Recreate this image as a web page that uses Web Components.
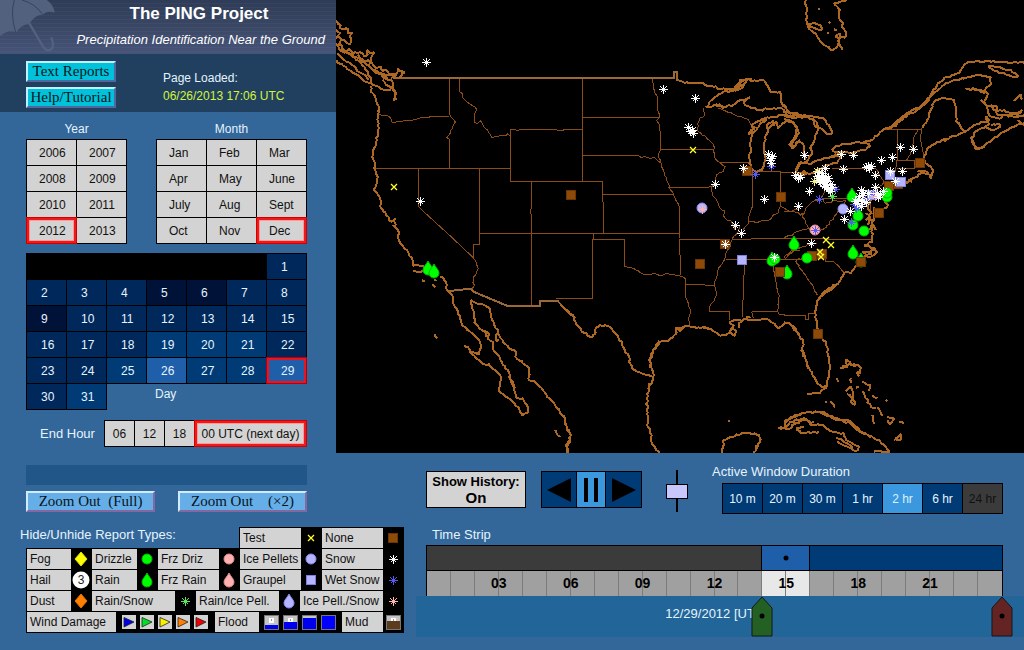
<!DOCTYPE html>
<html lang="en">
<head>
<meta charset="utf-8">
<title>The PING Project</title>
<style>
  html { background: #336699; }
  body { margin: 0; color: #e4f4ff; font: 12px/16px "Liberation Sans", Arial, sans-serif; }
</style>
</head>
<body>
<ping-page>
  <ping-sidebar slot="side"></ping-sidebar>
  <ping-map slot="map"></ping-map>
  <ping-legend slot="legend"></ping-legend>
  <ping-controls slot="controls"></ping-controls>
</ping-page>

<script>
const define = (name, html, setup) => customElements.define(name, class extends HTMLElement {
  connectedCallback() {
    if (this.shadowRoot) return;
    const root = this.attachShadow({ mode: 'open' });
    root.innerHTML = (typeof html === 'function') ? html(this) : html;
    if (setup) setup(root, this);
  }
});

/* ---------- marker symbols shared by the map and the legend ---------- */
const star = c => `<path d="M.5-4V5M-4 .5H5M-2.500-2.500L3.500 3.500M3.500-2.500L-2.500 3.500" fill="none" stroke="${c}" shape-rendering="crispEdges"/>`;
const drop = (c, e) => `<path d="M0-7C2-3 5-1 5 2A5 5 0 0 1-5 2C-5-1-2-3 0-7Z" fill="${c}" stroke="${e}"/>`;
const disc = (c, e) => `<circle r="5" fill="${c}" stroke="${e}"/>`;
const box = (c, e) => `<rect x="-4.500" y="-4.500" width="9" height="9" fill="${c}" stroke="${e}"/>`;
const SYM = {
  snow: star('#fff'), wet: star('#5a5af0'), mix: star('#58e858'), pink: star('#ffb4b4'), ystar: star('#f0f080'),
  test: '<path d="M-3-3L3 3M3-3L-3 3" fill="none" stroke="#ff3" stroke-width="1.3"/>',
  none: box('#8f4a08', '#6a3606'), rain: drop('#0f0', '#0b0'), drizzle: disc('#0f0', '#0b0'),
  frain: drop('#ffb0b0', '#e08c8c'), fdriz: disc('#ffb0b0', '#e08c8c'),
  pellets: disc('#b4b4ff', '#8c8cf0'), graupel: box('#b4b4ff', '#8080e0'), rpell: drop('#b4b4ff', '#8c8cf0'),
  fog: '<path d="M0-7L6 0 0 7-6 0Z" fill="#ff0" stroke="#dcdc00"/>',
  dust: '<path d="M0-7L6 0 0 7-6 0Z" fill="#ff8000" stroke="#e07000"/>'
};

/* ---------- page shell ---------- */
define('ping-page', `
<style>
  :host { display: grid; grid-template-columns: 336px 80px minmax(0, 1fr); grid-template-rows: auto 62px auto; }
  ::slotted([slot=side]) { grid-area: 1 / 1 / 3 / 2; }
  ::slotted([slot=map]) { grid-area: 1 / 2 / 2 / 4; }
  ::slotted([slot=legend]) { grid-area: 3 / 1 / 4 / 3; }
  ::slotted([slot=controls]) { grid-area: 2 / 3 / 4 / 4; }
</style>
<slot name="side"></slot><slot name="map"></slot><slot name="legend"></slot><slot name="controls"></slot>`);

define('ping-choices', el => {
  const items = el.getAttribute('items').split(',');
  return `
<style>
  :host { display: grid; grid-template-columns: var(--cols, 1fr); grid-auto-rows: var(--row, 25px); gap: 1px; padding: 1px; background: #000; }
  button { position: relative; border: 0; margin: 0; padding: 0 0 0 var(--inset, 12px); background: var(--cell, #d3d3d3); color: var(--ink, #111);
    font: inherit; text-align: var(--align, left); white-space: nowrap; }
  .ring { box-shadow: 0 0 0 1px #d00000, inset 0 0 0 2px #f01818, inset 0 0 0 3px #ff9a9a; z-index: 1; }
  .lit { background: #3c98de; color: #d8f2ff; }
  button:disabled { background: #3b3b3b; color: #111; }
</style>
${items.map(t => `<button type="button" class="${t === el.getAttribute('ring') ? 'ring' : t === el.getAttribute('lit') ? 'lit' : ''}"${t === el.getAttribute('off') ? ' disabled' : ''}>${t}</button>`).join('')}`;
});

define('ping-calendar', () => {
  const tone = { 5: 'd', 6: 'd', 9: 'd', 19: 'm', 20: 'm', 21: 'm', 25: 'm', 27: 'm', 28: 'm', 31: 'm', 26: 'h', 29: 'h ring' };
  let days = '';
  for (let d = 1; d <= 31; d++) days += `<button type="button" class="${tone[d] || ''}">${d}</button>`;
  return `
<style>
  :host { display: grid; grid-template-columns: repeat(7, 1fr); grid-auto-rows: 25px; gap: 1px; padding: 1px; }
  button { border: 0; margin: 0; padding: 0 0 0 14px; font: inherit; text-align: left; color: #e4f4ff; background: #00285a; box-shadow: 0 0 0 1px #000; }
  .blank { grid-column: span 6; background: #000; box-shadow: 0 0 0 1px #000; }
  .d { background: #001238; } .m { background: #003b75; } .h { background: #1f5fa9; }
  .ring { position: relative; box-shadow: 0 0 0 1px #b00010, inset 0 0 0 2px #e81420; }
  span { grid-column: 4 / span 2; padding: 2px 0 0 8px; }
</style>
<div class="blank"></div>${days}<span>Day</span>`;
});

/* ---------- left column ---------- */
define('ping-sidebar', `
<style>
  :host { display: block; }
  header { position: relative; height: 54px; overflow: hidden; box-sizing: border-box;
    background: repeating-linear-gradient(#0000 0 3px, #ffffff08 3px 4px), linear-gradient(#2e3c58, #3a4764 50%, #46547a); color: #fff; }
  header svg { position: absolute; left: 0; top: 0; }
  h1 { margin: 0; padding: 2px 0 0 62px; font: bold 17px/24px "Liberation Sans", Arial, sans-serif; text-align: center; }
  h2 { margin: 0; padding: 4px 11px 0 0; font: italic 13px/20px "Liberation Sans", Arial, sans-serif; text-align: right; white-space: nowrap; position: relative; }
  .info { display: grid; grid-template-columns: 90px 1fr; column-gap: 47px; background: #21405f; height: 58px; padding: 7px 26px 4px; box-sizing: border-box; }
  .links { display: grid; grid-auto-rows: 21px; row-gap: 5px; }
  .raised { margin: 0; padding: 0; border: 2px solid; border-color: #c0f0ff #5068a0 #5068a0 #c0f0ff; background: #00c2da; color: #061420;
    font: 15px/17px "Liberation Serif", "Times New Roman", serif; white-space: pre; text-align: center; }
  .info p { margin: 8px 0 0; line-height: 18px; white-space: nowrap; }
  .info time { color: #d2f53c; display: block; }
  .pick { padding: 8px 29px 0 26px; }
  .two { display: grid; grid-template-columns: 101px 151px; justify-content: space-between; text-align: center; line-height: 19px; }
  .y { --cols: repeat(2, 1fr); } .m { --cols: repeat(3, 1fr); }
  ping-choices { line-height: 16px; }
  ping-calendar { margin-top: 9px; }
  .hour { display: flex; align-items: center; justify-content: space-between; margin-top: 10px; padding-left: 14px; font-size: 13px; }
  .hour ping-choices { --cols: 29px 29px 29px 111px; --inset: 0; --align: center; font-size: 12px; }
  .bar { height: 20px; margin-top: 18px; background: #215788; }
  .zoom { display: grid; grid-template-columns: 129px 129px; justify-content: space-between; grid-auto-rows: 21px; margin-top: 6px; }
  .zoom .raised { background: #66aee8; border-color: #d0ecff #8468a0 #8468a0 #d0ecff; }
</style>
<header>
  <svg width="56" height="54" viewBox="0 0 168 162" aria-hidden="true">
    <path d="M0 0H140Q160 12 164 38Q142 30 128 44Q104 44 88 72Q62 74 48 98Q28 86 0 108Z" fill="#52627e"/>
    <path d="M43 0Q30 40 47 98M66 0Q108 12 128 44" fill="none" stroke="#35435f" stroke-width="3"/>
    <path d="M88 70L127 136Q137 154 150 150Q162 144 158 126L154 112" fill="none" stroke="#52627e" stroke-width="7"/>
  </svg>
  <h1>The PING Project</h1>
  <h2>Precipitation Identification Near the Ground</h2>
</header>
<div class="info">
  <div class="links"><button type="button" class="raised">Text Reports</button><button type="button" class="raised">Help/Tutorial</button></div>
  <p>Page Loaded:<time>06/26/2013 17:06 UTC</time></p>
</div>
<div class="pick">
  <div class="two">
    <span>Year</span><span>Month</span>
    <ping-choices class="y" items="2006,2007,2008,2009,2010,2011,2012,2013" ring="2012"></ping-choices>
    <ping-choices class="m" items="Jan,Feb,Mar,Apr,May,June,July,Aug,Sept,Oct,Nov,Dec" ring="Dec"></ping-choices>
  </div>
  <ping-calendar></ping-calendar>
  <div class="hour"><span>End Hour</span><ping-choices items="06,12,18,00 UTC (next day)" ring="00 UTC (next day)"></ping-choices></div>
  <div class="bar"></div>
  <div class="zoom"><button type="button" class="raised">Zoom Out  (Full)</button><button type="button" class="raised">Zoom Out    (×2)</button></div>
</div>`);

/* ---------- map ---------- */
const TILES = [
  { x: 336, y: 0,
    coast: ['0 180 8 190 20 196 35 208 50 218 65 225 80 238 100 250 112 256 140 268 165 268', '0 130 10 150 25 158 45 165 60 180 75 190 85 200 95 215 105 235 112 256', '4 160 20 175 40 188 60 205 80 222 98 240',
      '0 60 5 72 15 75 10 85 22 88 30 85 38 88 35 100 50 98 42 110 45 125 42 133 30 125 15 118 5 110 0 115', '0 90 12 100 5 108 15 118 8 135 20 140 15 150 35 152 40 146 50 160 65 158 80 160 85 170 95 165 92 150 102 160 115 157 105 175 108 190 120 205 135 200 140 212 150 210 160 222 180 225 185 205 195 215 207 217 195 230 180 235 165 233',
      '20 150 40 160 60 172 80 178 95 195 105 205 125 215 150 225 180 230', '65 165 78 185 98 180 100 200 120 218 140 222 155 235', '135 225 150 238 165 240 172 250 170 265 178 275 172 300 180 298 176 270 165 262 150 255 140 240',
      '105 258 105 275 117 288 122 310 130 325 125 345 128 370 126 400 120 430 112 450 108 470 117 490 118 510 125 530 120 555 113 570 130 590 133 620 150 645 168 665 178 655 175 680 184 690 172 676'],
    river: ['130 342 150 345 162 352 168 367 185 365 205 362 225 362 250 355 285 349 340 349', '340 340 345 352 358 366 350 385 332 412 342 420 340 430', '370 275 378 280 380 292 395 307 422 328 415 345 416 368 425 370 435 362 445 383 455 390 467 413 480 408 495 406 510 406 515 402 523 408'],
    line: 'M340 234V340M340 430V505M118 505H523M370 234V275M523 388V545H720M523 388H535L545 392 553 388H655L665 391 685 390 695 388H720M247 505V620L323 690M430 505V690M586 545V625L583 635 586 645V690',
    nation: 'M175 234H720' },
  { x: 336, y: 225,
    coast: ['170 0 182 10 188 20 185 35 192 55 205 70 218 85 228 98 232 122 262 124 275 138', '232 140 255 140 262 137', '312 155 325 165 332 178 332 195 340 203 350 222 352 235 365 258 372 280 382 303 400 318 420 335 433 355 432 375 425 385 405 380 395 365 383 361', '400 378 425 403 445 418 465 425 487 445 495 462 490 498 505 512 530 530 550 550 560 572 575 563 577 550 565 530 560 520 548 520 540 518 535 495 525 465 515 435 500 420 490 395 472 375 470 350 455 340 445 320 430 310 415 293 413 260 405 225',
      '405 225 425 237 440 238 462 250 465 275 475 300 485 320 492 335 500 345 520 372 540 380 542 400 560 415 580 432 577 462 600 475 620 495 640 520 655 535 672 562 688 585 693 615 705 630 702 650 693 665 695 685', '448 315 452 335 460 330 450 320', '485 325 480 348 490 345', '522 455 530 480 538 490', '418 385 432 388', '448 420 460 415', '258 166 266 170', '290 178 298 186', '295 163 302 168', '295 326 303 340', '658 615 664 630 674 636'],
    river: ['412 98 420 110 427 130 420 148 412 165 415 180 408 192'],
    line: 'M586 0V243M430 25H720M308 0L412 98M430 0V58H412V98M660 220H720',
    nation: 'M340 198L405 191 412 200 515 243H612V228H665L690 255 717 280' },
  { x: 560, y: 0,
    coast: ['365 244 380 247 400 248 430 250 440 257 460 260 480 267 520 268 530 255 545 245 560 235 575 245 605 240 620 255 630 275 660 275 662 300 670 318 685 335 720 345', '437 322 455 300 470 288 490 275 520 272 545 265 560 245 530 262 540 240 575 238', '437 322 455 320 470 313 490 320 520 315 545 300 570 292 550 305 555 315 575 325 600 330 640 325 665 325 680 340', '470 320 480 313 492 326', '525 275 540 252 550 262',
      '565 405 580 385 575 375 590 365 605 358 620 358 600 372 590 390 575 405 572 425 572 450 567 465 570 480 573 505 590 515 605 510 612 490 615 470 612 450 612 430 615 410 625 395 622 375 638 362 640 378 650 365 655 385 665 375 680 360 700 365 710 380 708 400 700 420 688 435 700 440 720 420', '605 358 635 350 665 345 690 352 720 350', '565 400 585 380', '625 385 640 370'],
    river: ['475 325 495 332 520 342 545 350 565 358 570 370 575 385', '430 325 432 350 418 355 413 370 415 395 440 415 460 432 463 460 465 475 480 488 495 500 490 515 470 525 465 545 455 560 457 585 470 600 480 625 495 630 490 645 500 660 515 665 525 690', '277 234 283 270 292 290 292 325 299 345 298 352 290 362 300 375 302 400', '235 466 243 472 263 472 271 476 283 472 295 484 300 487', '302 448 296 460 300 485 310 510 320 540 328 562 340 583 347 600 355 612 358 620', '577 620 570 640 565 670 550 690', '565 665 590 668 610 660 625 662 640 645 655 638 660 620 675 625 690 635 715 630'],
    line: 'M302 400V448H462M67 352H298M67 234V545M0 391H10L13 388H67M67 466H235M358 620V690M325 562H440L455 560M128 583H340M0 545H128V605L131 610V690M480 487H573M577 515V620M661 517V620M595 515H661V517H720',
    nation: 'M0 234H342V217H352V240L365 244' },
  { x: 560, y: 225,
    coast: ['0 235 20 255 42 275 50 300 65 320 97 337 107 325 108 308 120 300 145 303 160 320 175 335 185 360 207 395 210 415 220 433 250 447 275 455', '280 455 275 430 270 400 280 375 300 352 325 347 350 325 350 308 365 310 385 303 410 308 440 308 460 318 480 332 505 325 515 310 530 320 525 332 510 320 522 300 510 292 530 285 570 285 620 281 635 292 655 310 670 300 685 293 700 305 715 325 720 330', '272 430 268 405 278 380 298 348', '345 308 360 318 370 308', '430 308 448 310', '560 283 562 275 572 278', '536 308 538 294 545 290', '280 455 275 475 265 490 262 520 262 600 275 630 275 655 298 683', '268 475 265 500', '487 683 490 645 515 635 545 625 570 625 598 628 600 650 590 670 580 683', '585 665 598 658', '0 565 15 580 20 610 33 630 25 650 18 660 22 683', '655 610 680 610 675 595 690 580 720 568', '660 606 685 612 700 598 720 592', '712 605 720 620', '506 586 510 590'],
    river: ['193 123 205 128 220 130 240 142 255 148 280 146 300 152 315 147 340 148 355 152 375 160', '376 215 385 235 392 260 385 280 387 300', '540 0 535 20 520 35 510 65 497 85 490 110 475 130 470 155 462 178 470 210 455 235 448 258', '648 170 657 210 653 258 657 268', '676 103 685 90 700 78 720 75', '720 100 708 108 712 118 720 122'],
    line: 'M0 25H357M131 0V25M100 25V43H193V123M97 43V220H0M357 0V40L360 90 362 150M358 43H497M376 160V178L462 181M376 180V215M448 258H508L510 285M497 103H720M555 108L550 180 548 275M635 103L648 170M657 268L690 272 720 272M575 260H653M575 260L580 280M520 43L560 43 600 40 720 40' },
  { x: 784, y: 0,
    coast: ['65 0 63 10 70 30 65 60 72 80 90 98 105 118 125 138 145 150 160 140 165 120 155 110 170 100 165 130 175 150', '165 110 185 110 185 95 172 80 178 70 165 55 168 30 160 20 150 10 170 5 190 0', '72 72 90 68 108 75 115 88 100 88 85 82 72 80', '103 27 108 27', '135 65 140 70', '136 98 130 99', '150 88 158 92',
      '0 315 10 335 30 345 60 345 100 350 125 362 145 400 130 402 110 385 95 380 85 355', '0 345 40 352 70 350 90 360 100 375 98 400 90 425 80 440 85 460 65 485 45 490 35 510 45 520 65 515', '0 355 25 365 40 385 45 400 30 420 20 435 25 445 40 425 55 430 60 450 62 480', '35 515 45 495 60 488 80 492 110 480 140 470 172 472 160 488 130 495 105 508 85 518 60 524 40 520', '145 450 155 438 190 432 230 428 255 432 258 440 240 450 210 458 180 455 155 458 145 450', '180 455 165 462 120 475',
      '230 428 262 420 290 395 320 380 350 355 385 330 415 315 440 285 470 245 490 230 525 220 540 195 555 185 600 185 660 186 720 188', '290 392 335 378 360 352 400 330 430 305 450 280 480 255 510 240 550 232 590 225 620 232 622 250 605 265 600 280 590 270 545 268', '565 262 590 275 612 280 600 305 610 325 615 345 650 355 660 345 690 350 720 345', '590 300 605 315 640 320 640 332 660 330 690 340 715 330 700 345 640 345 620 315', '613 197 640 200 680 210 703 230 680 228 650 220 630 212 613 197', '415 385 430 360 440 330 455 300 475 295 510 300 515 330 517 365 530 380 545 395',
      '430 445 445 435 475 420 490 415 480 425 510 408 530 400 545 395 570 375 600 365 615 360 605 350 615 372 595 385 570 400 565 420 575 440 590 445 620 425 650 400 700 375 720 370', '560 410 575 448 600 440', '620 375 640 372 650 380 625 390 605 385', '690 303 710 282 714 298', '700 360 720 375', '430 445 420 470 425 490 440 500 448 515 440 535 430 520 410 520 400 530 375 540 365 548', '400 515 420 512 435 525', '300 585 330 560 360 548 385 545', '300 600 312 615 295 632 290 650', '260 600 250 620 262 640 245 660 270 660 255 690', '268 620 270 650 262 670 275 690', '244 640 258 650 250 675'],
    river: ['400 388 390 410 385 440 378 465 368 480', '120 580 105 600 85 605 70 620 55 645 65 670 80 690', '0 635 30 635 50 645 55 640', '275 505 290 530 300 545 285 560 275 575 290 590', '115 595 125 610 150 600 170 605 185 600 175 620 150 650 125 685'],
    line: 'M300 387H410M340 388V475L334 515M412 385L410 420 420 470M340 480H425M340 505H390V480M145 505H275M115 595H255M120 530V580M0 517H35M260 595V640H285' },
  { x: 784, y: 225,
    coast: ['270 0 262 20 265 50 240 62 270 68 280 80 260 95 240 95 265 85 235 82 272 74', '245 100 220 120 200 145 180 145 165 170 145 190 110 215 95 245 95 270 98 300 110 330 125 350 130 380 138 420 135 455 125 490 100 503 70 508', '105 220 130 195 160 175', '0 292 15 293 30 315 45 330 58 345 55 375 65 405 75 430 90 455 100 475 115 488 125 482', '52 375 60 385 56 395', '68 420 74 432',
      '0 590 30 572 70 562 120 562 160 580 200 590 230 620 270 640 300 660 318 680 270 680', '105 562 150 582 195 592 220 615 262 637', '0 610 20 590 60 580 80 600 110 600 145 620 180 625 185 645 225 665 215 680 190 665 160 650', '20 600 45 592 60 583 90 592', '38 608 50 625 105 620', '40 612 60 606', '155 640 190 655 205 668',
      '168 430 190 425 185 405 198 412 205 420 228 425 230 445 220 440 225 455', '175 422 195 418 215 420', '158 460 163 470', '200 460 203 475', '185 500 200 485 208 510 212 540 205 535 200 515 188 508', '215 488 225 486', '235 470 258 480 255 498', '235 498 245 520 260 545 275 550', '265 510 280 520', '280 545 298 572', '305 525 310 530', '310 575 330 580 318 598 312 585', '345 592 360 594', '330 645 350 645 352 628 335 640', '265 570 270 598', '122 530 130 530', '138 530 152 548'],
    river: ['0 97 30 75 70 60 100 55', '0 40 40 20 75 10 95 25 130 5', '33 108 60 145 85 180 100 210', '70 98 100 80 120 80 125 108 145 108 180 142'],
    line: 'M0 40L262 44M0 103H70M0 271H65V282H72V265H92M35 105L70 98' }
];
const REPORTS = {
  none: '571,195 747,171 781,197 920,163 879,213 889,186 898,184 700,264 818,334 780,272 822,254 812,256 725,244',
  pellets: '702,208 843,209',
  graupel: '890,175 901,182 742,260 872,195',
  rain: '852,195 887,195 858,214 794,243 853,252 861,260 787,272 428,268 434,271 772,259',
  drizzle: '853,225 864,231 807,258 775,259 887,193',
  none2: '861,262 780,272',
  fdriz: '815,230',
  ystar: '814,181 817,171',
  test: '394,187 693,150 826,240 831,245 820,252 821,257',
  wet: '771,166 755,174 819,199 835,189 851,222 858,206 856,208 874,194 815,230 865,200 854,204',
  mix: '832,196', pink: '702,209 875,196',
  snow: '426,62 420,201 663,89 695,98 688,127 690,131 693,133 692,130 715,184 743,168 768,154 772,156 770,160 771,163 771,158 735,225 764,199 804,155 841,154 853,155 843,169 900,147 913,149 881,160 892,157 875,175 890,171 902,171 895,181 866,167 869,168 871,166 868,166 795,175 800,177 798,178 809,191 798,206 825,168 819,172 821,176 818,178 822,180 825,180 820,182 823,183 826,184 828,178 824,186 830,184 828,189 832,187 830,191 817,176 823,178 826,187 821,179 825,176 822,173 819,180 827,181 861,190 862,195 858,199 862,201 866,202 857,203 861,206 855,201 868,193 875,187 877,193 880,194 883,191 878,197 863,193 859,196 850,211 844,219 741,233 725,244 774,257 811,243'
};

/* breaks each stretch of shoreline into small uneven steps */
let seed = 7;
const rand = () => (seed = (seed * 16807) % 2147483647) / 2147483647 - 0.5;
function rough(points, step, amp) {
  const p = points.split(' ').map(Number);
  let d = `M${p[0]} ${p[1]}`;
  for (let i = 2; i < p.length; i += 2) {
    const dx = p[i] - p[i - 2], dy = p[i + 1] - p[i - 1], n = Math.max(1, Math.round(Math.hypot(dx, dy) / step));
    for (let k = 1; k < n; k++)
      d += `L${Math.round(p[i - 2] + dx * k / n + rand() * amp)} ${Math.round(p[i - 1] + dy * k / n + rand() * amp)}`;
    d += `L${p[i]} ${p[i + 1]}`;
  }
  return d;
}

define('ping-map', () => `
<style>
  :host { display: block; background: #000; }
  .map { display: block; width: 100%; aspect-ratio: 688 / 453; }
  .geo { fill: none; shape-rendering: crispEdges; }
  .coast { stroke: #ad6823; stroke-width: 6; stroke-linejoin: bevel; }
  .thin { stroke: #8c4c16; stroke-width: 3; }
  .nation { stroke: #9c6835; stroke-width: 6; }
</style>
<svg class="map" viewBox="336 0 688 453" role="img" aria-label="Map of precipitation reports">
  ${TILES.map(t => `<svg class="geo" x="${t.x}" y="${t.y}" width="240" height="230" viewBox="0 0 720 690">
    <path class="thin" d="${t.line}${t.river.map(r => rough(r, 9, 5)).join('')}"/>
    ${t.nation ? `<path class="nation" d="${t.nation}"/>` : ''}
    <path class="coast" d="${t.coast.map(c => rough(c, 8, 6)).join('')}"/></svg>`).join('')}
  ${Object.entries(REPORTS).map(([k, list]) => list.split(' ').map(p => `<g transform="translate(${p.replace(',', ' ')})">${SYM[k.replace('2', '')]}</g>`).join('')).join('')}
</svg>`);

/* ---------- legend ---------- */
define('ping-legend-item', `
<style>
  :host { display: flex; flex: none; background: #000; padding: 1px 0 0 1px; }
  button { flex: none; width: var(--w); height: 20px; margin: 0; border: 0; padding: 0 0 0 3px; background: #d3d3d3; color: #111; font: inherit; text-align: left; white-space: nowrap; }
  span { display: flex; align-items: center; justify-content: center; width: var(--i, 20px); }
</style>
<button type="button"><slot></slot></button><span><slot name="icon"></slot></span>`);

const glyph = k => `<svg slot="icon" width="18" height="18" viewBox="-9 -9 18 18">${SYM[k]}</svg>`;
const item = (w, name, icon, iw) => `<ping-legend-item style="--w:${w}px${iw ? `;--i:${iw}px` : ''}">${name}${icon}</ping-legend-item>`;
const wind = ['#0000e8', '#00e020', '#f8f000', '#ff8000', '#f00000'].map((c, i) =>
  `<g transform="translate(${i * 18} 0)"><rect width="14" height="14" fill="#d3d3d3"/><path d="M2 2.500L12 7 2 12Z" fill="${c}" stroke="#222" stroke-width=".8"/></g>`).join('');
const tank = (x, h, c) => `<g transform="translate(${x} 0)"><rect x=".5" y=".5" width="14" height="14" fill="#c4c4c4" stroke="#777"/><path d="M5 3H10V8H5Z" fill="#fff"/><path d="M7 4H8V6H7Z" fill="#999"/><rect x="1" y="${14 - h}" width="13" height="${h}" fill="${c}"/></g>`;
define('ping-legend', `
<style>
  :host { display: block; padding: 12px 12px 18px 20px; }
  .row { display: flex; margin-left: 6px; background: #000; padding-right: 1px; }
  .top { display: flex; justify-content: space-between; font-size: 13px; }
  .top div { display: flex; font-size: 12px; background: #000; padding-right: 1px; }
  .last { padding-bottom: 1px; }
</style>
<div class="top"><span>Hide/Unhide Report Types:</span><div>${item(61, 'Test', glyph('test'))}${item(61, 'None', glyph('none'))}</div></div>
<div class="row">${item(44, 'Fog', glyph('fog'))}${item(45, 'Drizzle', glyph('drizzle'))}${item(61, 'Frz Driz', glyph('fdriz'))}${item(61, 'Ice Pellets', glyph('pellets'))}${item(61, 'Snow', glyph('snow'))}</div>
<div class="row">${item(44, 'Hail', '<svg slot="icon" width="18" height="18" viewBox="0 0 18 18"><circle cx="9" cy="9" r="8.500" fill="#fff"/><text x="9" y="13" font-size="12" text-anchor="middle" fill="#222">3</text></svg>')}${item(45, 'Rain', glyph('rain'))}${item(61, 'Frz Rain', glyph('frain'))}${item(61, 'Graupel', glyph('graupel'))}${item(61, 'Wet Snow', glyph('wet'))}</div>
<div class="row">${item(44, 'Dust', glyph('dust'))}${item(83, 'Rain/Snow', glyph('mix'))}${item(83, 'Rain/Ice Pell.', glyph('rpell'))}${item(83, 'Ice Pell./Snow', glyph('pink'))}</div>
<div class="row last">${item(89, 'Wind Damage', `<svg slot="icon" width="86" height="14" viewBox="0 0 86 14">${wind}</svg>`, 98)}${item(44, 'Flood', `<svg slot="icon" width="72" height="15" viewBox="0 0 72 15">${tank(0, 4, '#0000f0')}${tank(19, 7, '#0000f0')}${tank(38, 11, '#0000f0')}${tank(57, 13, '#0000ff')}</svg>`, 82)}${item(41, 'Mud', `<svg slot="icon" width="15" height="15" viewBox="0 0 15 15">${tank(0, 8, '#5c3c1c')}</svg>`)}</div>`);

/* ---------- bottom right controls ---------- */
define('ping-controls', `
<style>
  :host { display: block; }
  .bar { display: flex; align-items: flex-start; padding: 9px 21px 0 10px; }
  .hist { width: 100px; height: 37px; margin: 9px 15px 0 0; padding: 0; border: 1px solid #000; background: #d3d3d3; color: #000; font: bold 13px/17px "Liberation Sans", sans-serif; }
  .hist b { display: block; font-size: 15px; line-height: 16px; }
  .play { display: grid; grid-template-columns: 34px 28px 35px; gap: 1px; padding: 1px; background: #000; height: 35px; margin: 9px 24px 0 0; }
  .play button { border: 0; margin: 0; padding: 0; display: flex; align-items: center; justify-content: center; background: #003b75; }
  .play .on { background: #3c98de; }
  input { appearance: none; writing-mode: vertical-lr; width: 22px; height: 42px; margin: 8px 0 0; background: linear-gradient(#000, #000) center / 2px 100% no-repeat; }
  input::-webkit-slider-runnable-track { width: 22px; }
  input::-webkit-slider-thumb { appearance: none; width: 22px; height: 15px; border: 1px solid #000; background: #c8c8ff; box-sizing: border-box; }
  .win { margin-left: auto; width: 291px; font-size: 13px; padding-top: 2px; }
  .win ping-choices { --cols: repeat(7, 1fr); --row: 29px; --cell: #003b75; --ink: #e4f4ff; --inset: 0; --align: center; margin: 3px 0 0 10px; font-size: 12px; }
</style>
<div class="bar">
  <button type="button" class="hist">Show History:<b>On</b></button>
  <div class="play">
    <button type="button" aria-label="Back"><svg width="24" height="24" viewBox="0 0 24 24"><path d="M0 12L24 0V24Z"/></svg></button>
    <button type="button" class="on" aria-label="Pause"><svg width="14" height="24" viewBox="0 0 14 24"><path d="M0 0H4V24H0ZM10 0H14V24H10Z"/></svg></button>
    <button type="button" aria-label="Forward"><svg width="24" height="24" viewBox="0 0 24 24"><path d="M24 12L0 0V24Z"/></svg></button>
  </div>
  <input type="range" min="0" max="100" value="50" aria-label="Animation speed">
  <div class="win"><span>Active Window Duration</span>
    <ping-choices items="10 m,20 m,30 m,1 hr,2 hr,6 hr,24 hr" lit="2 hr" off="24 hr"></ping-choices></div>
</div>
<ping-time-strip></ping-time-strip>`);

define('ping-time-strip', () => {
  const hours = Array.from({ length: 24 }, (_, i) => `<i class="${i === 14 || i === 15 ? 'now' : ''}" style="grid-column:${i + 1}"></i>`).join('');
  const names = ['03', '06', '09', '12', '15', '18', '21'].map((n, k) => `<b style="grid-column:${k * 3 + 3} / span 2">${n}</b>`).join('');
  const pin = (c, cls) => `<svg class="pin ${cls}" width="22" height="41" viewBox="0 0 22 41" aria-hidden="true"><path d="M1 12L11 1 21 12V40H1Z" fill="${c}" stroke="#161616"/><circle cx="11" cy="20" r="2.500"/></svg>`;
  return `
<style>
  :host { display: block; padding-top: 12px; }
  .name { padding-left: 16px; font-size: 13px; line-height: 18px; }
  .strip { margin: 1px 21px 0 10px; border: 1px solid #000; }
  .span, .hours { display: grid; grid-template-columns: repeat(24, minmax(0, 1fr)); height: 24px; }
  .span div { background: #3b3b3b; border-left: 1px solid #000; margin-left: -1px; display: flex; align-items: center; justify-content: center; }
  .span { border-bottom: 1px solid #000; }
  .hours { color: #000; font-size: 14px; line-height: 25px; }
  i { grid-row: 1; background: #a0a0a0; border-right: 1px solid #7c7c7c; }
  i:last-of-type { border: 0; }
  .now { background: #e8e8e8; }
  b { grid-row: 1; text-align: center; }
  .foot { position: relative; height: 41px; background: #226599; }
  .date { position: absolute; left: 41%; top: 9px; font-size: 13px; line-height: 18px; white-space: nowrap; }
  .track { position: absolute; inset: 0 22px 0 10px; }
  .pin { position: absolute; top: 0; margin-left: -11px; }
  .start { left: 58.333%; } .end { left: 100%; }
</style>
<div class="name">Time Strip</div>
<div class="strip">
  <div class="span"><div style="grid-column:span 14"></div><div style="grid-column:span 2;background:#1f5fa9"><svg width="6" height="6" viewBox="0 0 6 6"><circle cx="3" cy="3" r="2.500"/></svg></div><div style="grid-column:span 8;background:#003b75"></div></div>
  <div class="hours">${hours}${names}</div>
</div>
<div class="foot"><span class="date">12/29/2012 [UTC]</span><div class="track">${pin('#246024', 'start')}${pin('#642424', 'end')}</div></div>`;
});
</script>
</body>
</html>
